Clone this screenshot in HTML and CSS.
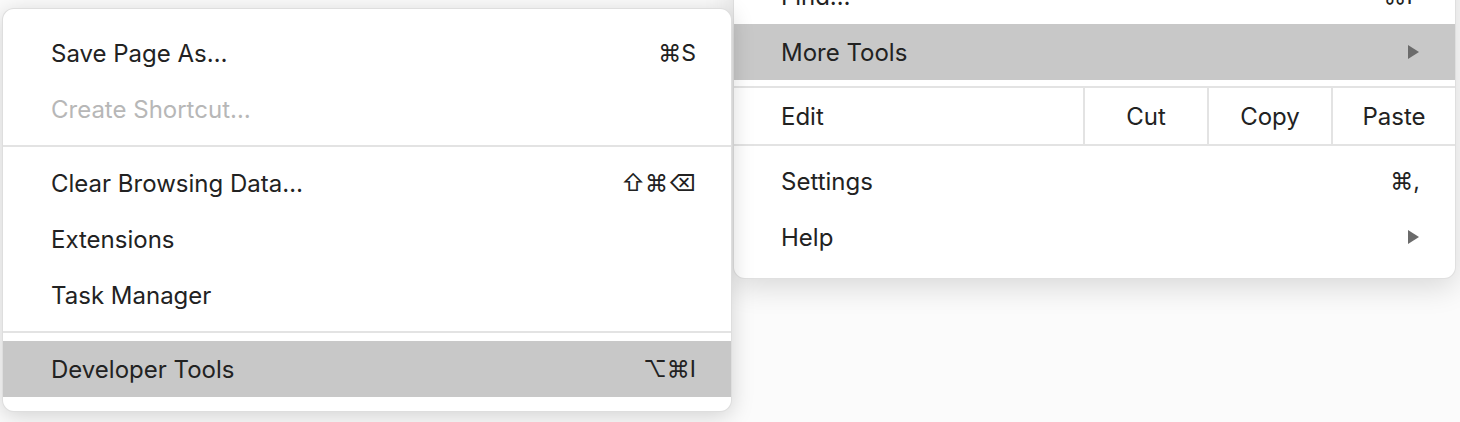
FILE: index.html
```html
<!DOCTYPE html>
<html>
<head>
<meta charset="utf-8">
<link rel="stylesheet" href="styles.css">
</head>
<body>
<div class="stage">
  <div class="menu menu-main">
    <div class="row"><span class="label">Find…</span><span class="key">⌘F</span></div>
    <div class="row active"><span class="label">More Tools</span>
      <svg class="arrow" width="11" height="14" viewBox="0 0 11 14"><path d="M0 0 L11 7 L0 14 Z"/></svg>
    </div>
    <div class="edit-row">
      <span class="edit-label">Edit</span>
      <span class="cell">Cut</span>
      <span class="cell">Copy</span>
      <span class="cell">Paste</span>
    </div>
    <div class="row"><span class="label">Settings</span><span class="key">⌘,</span></div>
    <div class="row"><span class="label">Help</span>
      <svg class="arrow" width="11" height="14" viewBox="0 0 11 14"><path d="M0 0 L11 7 L0 14 Z"/></svg>
    </div>
  </div>

  <div class="menu menu-sub">
    <div class="row"><span class="label">Save Page As…</span><span class="key">⌘S</span></div>
    <div class="row disabled"><span class="label">Create Shortcut…</span></div>
    <div class="sep"></div>
    <div class="row"><span class="label">Clear Browsing Data…</span><span class="key">⇧⌘⌫</span></div>
    <div class="row"><span class="label">Extensions</span></div>
    <div class="row"><span class="label">Task Manager</span></div>
    <div class="sep"></div>
    <div class="row active"><span class="label">Developer Tools</span><span class="key">⌥⌘I</span></div>
  </div>
</div>
</body>
</html>
```
FILE: styles.css
```css
html, body {
  margin: 0;
  padding: 0;
  background: #ffffff;
}
.stage {
  position: relative;
  width: 1460px;
  height: 422px;
  overflow: hidden;
  background: #fbfbfb;
  font-family: "Inter", "DejaVu Sans", sans-serif;
  font-size: 24px;
  color: #222222;
}
.menu {
  position: absolute;
  background: #ffffff;
  box-sizing: border-box;
  overflow: hidden;
}
.menu-sub {
  left: 2px;
  top: 8px;
  width: 730px;
  border: 1px solid rgba(0, 0, 0, 0.13);
  border-radius: 12px;
  padding: 16px 0 14px 0;
  box-shadow: 0 4px 22px rgba(0, 0, 0, 0.17);
  z-index: 2;
}
.menu-main {
  left: 733px;
  top: -40px;
  width: 723px;
  border: 1px solid rgba(0, 0, 0, 0.12);
  border-top: none;
  border-radius: 0 0 12px 12px;
  padding: 8px 0 13px 0;
  box-shadow: 0 8px 30px rgba(0, 0, 0, 0.14);
  z-index: 1;
}
.row {
  height: 56px;
  display: flex;
  align-items: center;
  justify-content: space-between;
  padding: 0 35px 0 48px;
}
.menu-main .row {
  padding: 0 35px 0 47px;
}
.row.active {
  background: #c8c8c8;
}
.row.disabled {
  color: #b7b7b7;
}
.key {
  font-family: "Inter", "DejaVu Sans", sans-serif;
  font-size: 23px;
}
.arrow {
  fill: #6b6b6b;
  margin-right: 1px;
}
.sep {
  height: 2px;
  background: #e3e3e3;
  margin: 8px 0;
}
.edit-row {
  display: flex;
  height: 56px;
  margin: 6px 0 7px 0;
  border-top: 2px solid #e3e3e3;
  border-bottom: 2px solid #e3e3e3;
}
.edit-label {
  flex: 1;
  display: flex;
  align-items: center;
  padding-left: 47px;
}
.cell {
  width: 124px;
  box-sizing: border-box;
  border-left: 2px solid #e3e3e3;
  display: flex;
  align-items: center;
  justify-content: center;
}
```
